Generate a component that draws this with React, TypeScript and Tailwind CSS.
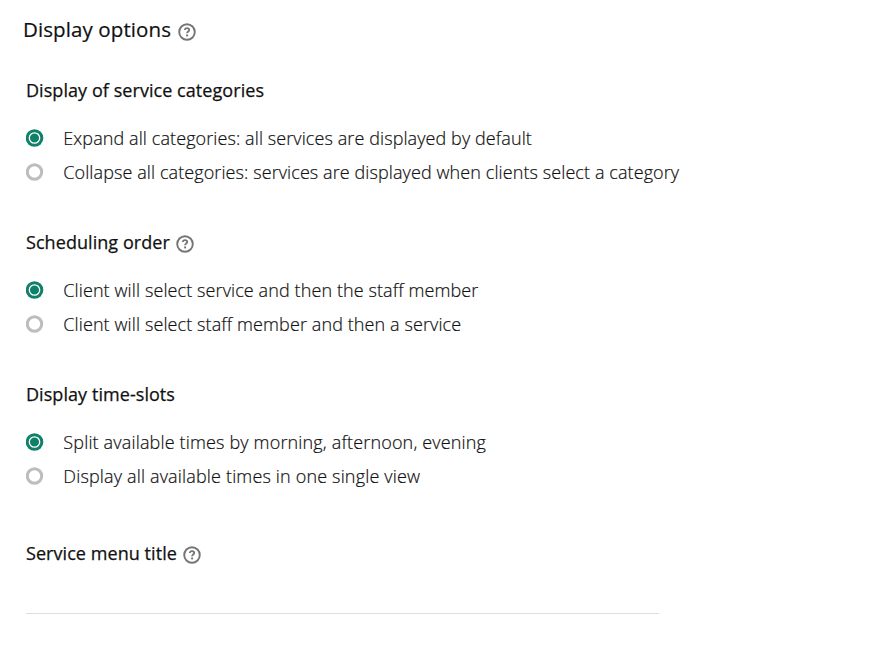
type HeadingProps = {
  title: string;
  help?: boolean;
};

type RadioGroupProps = {
  name: string;
  options: string[];
  tracking?: string;
};

function HelpIcon() {
  return (
    <svg viewBox="0 0 18 18" className="mt-[3px] size-[18px] shrink-0" fill="none" stroke="#757575">
      <circle cx="9" cy="9" r="7.8" strokeWidth="1.9" />
      <path d="M6.8 7.1c0-1.2.9-1.9 2.2-1.9s2.2.7 2.2 1.8c0 1.5-2.1 1.6-2.1 3.3" strokeWidth="1.8" />
      <path d="M9.1 11.5v1.9" strokeWidth="2" />
    </svg>
  );
}

function SectionHeading({ title, help }: HeadingProps) {
  return (
    <h2 className="flex h-6 items-center gap-1.5 text-[18px] leading-6 font-medium tracking-[0.06px] [-webkit-text-stroke:0.25px_#111]">
      {title}
      {help && <HelpIcon />}
    </h2>
  );
}

function RadioGroup({ name, options, tracking = "tracking-[0.1px]" }: RadioGroupProps) {
  return (
    <div role="radiogroup" className={`mt-[19px] ${tracking}`}>
      {options.map((option, index) => (
        <label
          key={option}
          className="flex h-[34px] items-center text-[18px] font-light [-webkit-text-stroke:0.2px_#111]"
        >
          <input type="radio" name={name} defaultChecked={index === 0} className="sr-only" />
          <svg viewBox="0 0 18 18" className="-ml-[0.5px] mr-[19.8px] size-[18px] shrink-0" fill="none">
            {index === 0 ? (
              <>
                <circle cx="8.5" cy="9" r="8.8" fill="#108069" />
                <circle cx="8.5" cy="9" r="5.2" stroke="#fff" strokeWidth="1.3" />
              </>
            ) : (
              <circle cx="8.5" cy="9" r="7.2" stroke="#bdbdbd" strokeWidth="3" />
            )}
          </svg>
          <span>{option}</span>
        </label>
      ))}
    </div>
  );
}

export default function App() {
  return (
    <main className="h-[657px] bg-white pt-[13px] pl-[26px] font-['Open_Sans',sans-serif] text-[#111]">
      <h1 className="-ml-[3px] flex h-8 items-center gap-[7px] text-[20.5px] font-medium tracking-[0.1px] [-webkit-text-stroke:0.2px_#111]">
        Display options
        <span className="pt-0.5">
          <HelpIcon />
        </span>
      </h1>
      <section className="mt-[33px]">
        <SectionHeading title="Display of service categories" />
        <RadioGroup
          name="categories"
          tracking="tracking-[0.09px]"
          options={[
            "Expand all categories: all services are displayed by default",
            "Collapse all categories: services are displayed when clients select a category",
          ]}
        />
      </section>
      <section className="mt-[41px]">
        <SectionHeading title="Scheduling order" help />
        <RadioGroup
          name="order"
          options={[
            "Client will select service and then the staff member",
            "Client will select staff member and then a service",
          ]}
        />
      </section>
      <section className="mt-[41px]">
        <SectionHeading title="Display time-slots" />
        <RadioGroup
          name="slots"
          tracking="tracking-[0.16px]"
          options={[
            "Split available times by morning, afternoon, evening",
            "Display all available times in one single view",
          ]}
        />
      </section>
      <section className="mt-12 w-[633px] border-b border-[#ddd] pb-12">
        <SectionHeading title="Service menu title" help />
      </section>
    </main>
  );
}
